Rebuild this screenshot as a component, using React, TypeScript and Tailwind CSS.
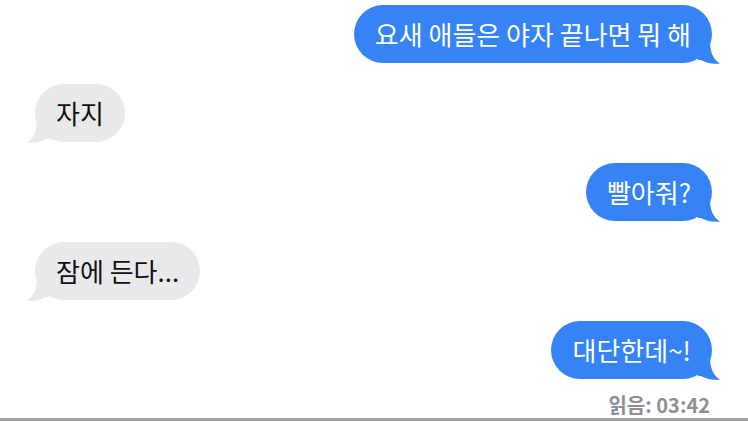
const messages = [
  { id: 1, mine: true, text: "요새 애들은 야자 끝나면 뭐 해" },
  { id: 2, mine: false, text: "자지" },
  { id: 3, mine: true, text: "빨아줘?" },
  { id: 4, mine: false, text: "잠에 든다..." },
  { id: 5, mine: true, text: "대단한데~!" },
];

function Tail({ mine }: { mine: boolean }) {
  // little hook under the bubble corner
  if (mine) {
    return (
      <svg
        className="absolute -right-[10px] -bottom-[2px]"
        width="24"
        height="24"
        viewBox="0 0 24 24"
      >
        <path d="M0 0 H12 C12 11 15 18 22 22.5 C15 23.6 8 22 3 19 L0 19 Z" fill="#3583f5" />
      </svg>
    );
  }
  return (
    <svg
      className="absolute -left-[10px] -bottom-[2px]"
      width="24"
      height="24"
      viewBox="0 0 24 24"
    >
      <path d="M24 0 H12 C12 11 9 18 2 22.5 C9 23.6 16 22 21 19 L24 19 Z" fill="#e9e9eb" />
    </svg>
  );
}

function Bubble({ mine, text }: { mine: boolean; text: string }) {
  return (
    <div className={`flex ${mine ? "justify-end" : "justify-start"}`}>
      <div
        className={`relative rounded-[29px] h-[58px] flex items-center px-[21px] text-[26px] leading-[30px] font-normal ${
          mine ? "bg-[#3583f5] text-white" : "bg-[#e9e9eb] text-[#111]"
        }`}
      >
        <Tail mine={mine} />
        <span className="relative">{text}</span>
      </div>
    </div>
  );
}

export default function App() {
  return (
    <div
      className="w-[748px] h-[421px] bg-white flex flex-col overflow-hidden"
      style={{ fontFamily: '"Noto Sans CJK KR", "Noto Sans", sans-serif' }}
    >
      <div className="flex-1 flex flex-col gap-[21px] pt-[5px] pl-[35px] pr-[36px]">
        {messages.map((m) => (
          <Bubble key={m.id} mine={m.mine} text={m.text} />
        ))}
        <div className="-mt-[6px] pr-[2px] flex justify-end text-[20px] leading-[22px] font-semibold text-[#8e8e93]">
          읽음: 03:42
        </div>
      </div>
      <div className="h-[3px] bg-[#a3a3a3]" />
    </div>
  );
}
